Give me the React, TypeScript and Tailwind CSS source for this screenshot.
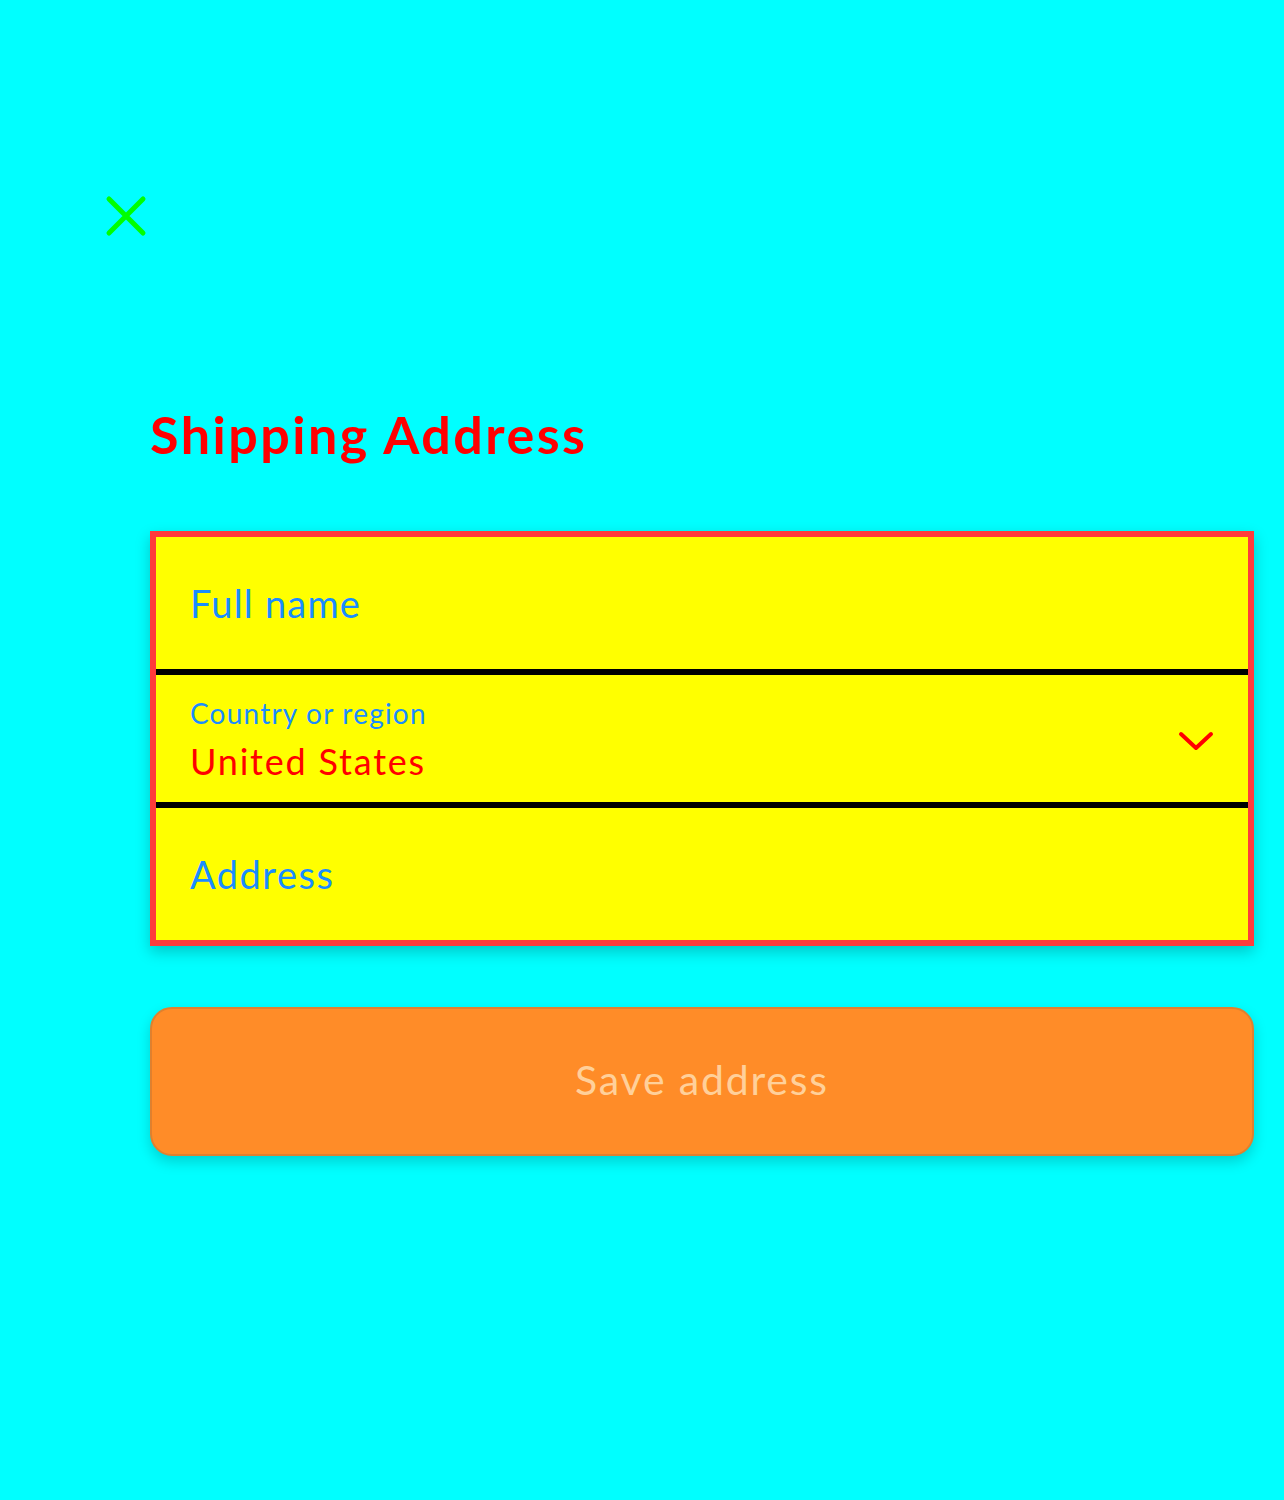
import React from "react";

export default function App() {
  return (
    <div
      className="min-h-[1500px] w-full bg-[#00ffff]"
      style={{ fontFamily: "Lato, 'Noto Sans', sans-serif" }}
    >
      <div className="pt-[195px] pl-[105px]">
        <button className="block h-[42px] w-[42px]" aria-label="Close">
          <svg width="42" height="42" viewBox="0 0 42 42">
            <path
              d="M4 4 L38 38 M38 4 L4 38"
              stroke="#00ff00"
              strokeWidth="5"
              strokeLinecap="round"
              fill="none"
            />
          </svg>
        </button>
      </div>
      <div className="ml-[150px] w-[1104px]">
        <h1 className="mt-[167px] text-[52px] font-bold leading-[60px] tracking-[2.5px] text-[#ff0000]">
          Shipping Address
        </h1>
        <div className="mt-[67px] border-[6px] border-[#ff3b3b] bg-[#ffff00] shadow-[0_6px_14px_rgba(0,0,0,0.22)]">
          <div className="flex h-[132px] items-center px-[34px] text-[38px] tracking-[1.2px] text-[#1a8cff]">
            Full name
          </div>
          <div className="h-[6px] bg-black" />
          <div className="flex h-[127px] items-start justify-between pl-[34px] pr-[34px] pt-[21px]">
            <div className="flex flex-col">
              <span className="text-[28px] leading-[34px] tracking-[1.2px] text-[#1a8cff]">
                Country or region
              </span>
              <span className="mt-[10px] text-[36px] leading-[43px] tracking-[1.8px] text-[#ff0000]">
                United States
              </span>
            </div>
            <svg className="mt-[35px]" width="36" height="22" viewBox="0 0 36 22">
              <path
                d="M3 3 L18 17 L33 3"
                stroke="#ff0000"
                strokeWidth="4"
                strokeLinecap="round"
                strokeLinejoin="round"
                fill="none"
              />
            </svg>
          </div>
          <div className="h-[6px] bg-black" />
          <div className="flex h-[132px] items-center px-[34px] text-[38px] tracking-[1.5px] text-[#1a8cff]">
            Address
          </div>
        </div>
        <button className="mt-[61px] flex h-[149px] w-full items-center justify-center rounded-[22px] border-2 border-[#e0802e] bg-[#ff8c28] pb-[3px] text-[41px] tracking-[1.8px] text-[#ffd09a] shadow-[0_6px_14px_rgba(0,0,0,0.18)]">
          Save address
        </button>
      </div>
    </div>
  );
}
